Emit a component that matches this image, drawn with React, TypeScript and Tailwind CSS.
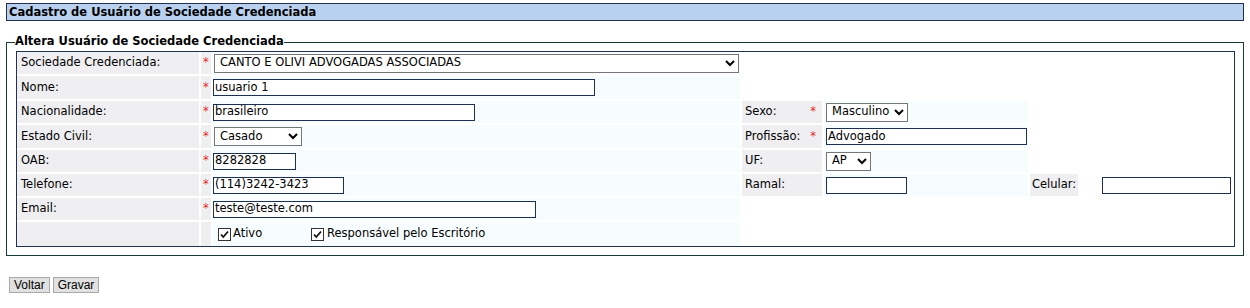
import React from "react";

const GRAY = "bg-[#efeff1]";
const CYAN = "bg-[#f7fdfe]";

function Chevron() {
  return (
    <svg width="10" height="7" viewBox="0 0 10 7" className="shrink-0">
      <polyline points="1,1 5,5 9,1" fill="none" stroke="#000" strokeWidth="2" />
    </svg>
  );
}

function Select({ value, w }: { value: string; w: string }) {
  return (
    <div className={`${w} h-[19px] bg-white border border-[#767676] flex items-center justify-between pl-[5px] pr-[3px]`}>
      <span>{value}</span>
      <Chevron />
    </div>
  );
}

function Input({ value, w }: { value?: string; w: string }) {
  return (
    <div className={`${w} h-[17px] bg-white border border-[#1c3151] flex items-center pl-[1px]`}>
      <span>{value ?? ""}</span>
    </div>
  );
}

function Check() {
  return (
    <span className="w-[13px] h-[13px] border border-[#333] bg-white flex items-center justify-center shrink-0">
      <svg width="11" height="11" viewBox="0 0 11 11">
        <polyline points="2,5.5 4.3,8 9,2.5" fill="none" stroke="#111" strokeWidth="1.8" />
      </svg>
    </span>
  );
}

function Star() {
  return <span className="text-[#e8262a]">*</span>;
}

type RowProps = {
  h: string;
  label?: string;
  star?: boolean;
  field: React.ReactNode;
  fieldPl?: string;
  right?: React.ReactNode;
};

function Row({ h, label, star, field, fieldPl = "pl-0", right }: RowProps) {
  return (
    <div className={`flex gap-[2px] ${h}`}>
      <div className={`w-[182px] ${GRAY} flex items-center pl-[4px]`}>{label}</div>
      <div className={`w-[10px] ${GRAY} flex items-center pl-[2px]`}>{star ? <Star /> : null}</div>
      <div className={`w-[527px] ${CYAN} flex items-center ${fieldPl}`}>{field}</div>
      {right}
    </div>
  );
}

function Right({ label, star, field, extra }: { label: string; star?: boolean; field: React.ReactNode; extra?: React.ReactNode }) {
  return (
    <>
      <div className={`w-[80px] ${GRAY} flex items-center justify-between pl-[3px] pr-[6px]`}>
        <span>{label}</span>
        {star ? <Star /> : null}
      </div>
      <div className={`w-[204px] ${CYAN} flex items-center pl-[2px]`}>{field}</div>
      {extra}
    </>
  );
}

export default function App() {
  return (
    <div className="w-[1250px] h-[308px] bg-white text-black text-[11.5px] font-['DejaVu_Sans',sans-serif] overflow-hidden">
      <div className="pt-[3px] pl-[6px]">
        <div className="w-[1238px] h-[18px] bg-[#b9d1ee] border border-[#1f3050] flex items-center pl-[2px] pt-[1px] font-bold leading-[13px]">
          Cadastro de Usuário de Sociedade Credenciada
        </div>
      </div>

      <div className="relative ml-[6px] mt-[21px] w-[1238px] border border-[#173a3a] px-[9px] pt-[8px] pb-[8px]">
        <span className="absolute left-[8px] top-[-8px] bg-white font-bold leading-[13px]">
          Altera Usuário de Sociedade Credenciada
        </span>
        <div className="w-[1219px] border border-[#1f3252] flex flex-col gap-[2px]">
          <Row
            h="h-[22px]"
            label="Sociedade Credenciada:"
            star
            fieldPl="pl-[1px]"
            field={<Select value="CANTO E OLIVI ADVOGADAS ASSOCIADAS" w="w-[525px]" />}
          />
          <Row h="h-[23px]" label="Nome:" star field={<Input value="usuario 1" w="w-[382px]" />} />
          <Row
            h="h-[22px]"
            label="Nacionalidade:"
            star
            field={<Input value="brasileiro" w="w-[262px]" />}
            right={<Right label="Sexo:" star field={<Select value="Masculino" w="w-[82px]" />} />}
          />
          <Row
            h="h-[23px]"
            label="Estado Civil:"
            star
            fieldPl="pl-[1px]"
            field={<Select value="Casado" w="w-[88px]" />}
            right={<Right label="Profissão:" star field={<Input value="Advogado" w="w-[201px]" />} />}
          />
          <Row
            h="h-[22px]"
            label="OAB:"
            star
            field={<Input value="8282828" w="w-[83px]" />}
            right={<Right label="UF:" field={<Select value="AP" w="w-[45px]" />} />}
          />
          <Row
            h="h-[22px]"
            label="Telefone:"
            star
            field={<Input value="(114)3242-3423" w="w-[131px]" />}
            right={
              <Right
                label="Ramal:"
                field={<Input w="w-[81px]" />}
                extra={
                  <>
                    <div className={`w-[48px] ${GRAY} flex items-center pl-[2px]`}>Celular:</div>
                    <div className="flex items-center pl-[22px]">
                      <Input w="w-[129px]" />
                    </div>
                  </>
                }
              />
            }
          />
          <Row h="h-[22px]" label="Email:" star field={<Input value="teste@teste.com" w="w-[323px]" />} />
          <Row
            h="h-[24px]"
            fieldPl="pl-[5px]"
            field={
              <div className="flex items-center">
                <div className="w-[93px] flex items-center gap-[2px]">
                  <Check />
                  <span>Ativo</span>
                </div>
                <div className="flex items-center gap-[3px]">
                  <Check />
                  <span>Responsável pelo Escritório</span>
                </div>
              </div>
            }
          />
        </div>
      </div>

      <div className="mt-[21px] ml-[9px] flex gap-[3px] font-['Liberation_Sans',sans-serif] text-[12px]">
        <button className="h-[16px] px-[4px] bg-[#e1e1e1] border border-[#a9a9a9] leading-[14px]">Voltar</button>
        <button className="h-[16px] px-[4px] bg-[#e1e1e1] border border-[#a9a9a9] leading-[14px]">Gravar</button>
      </div>
    </div>
  );
}
